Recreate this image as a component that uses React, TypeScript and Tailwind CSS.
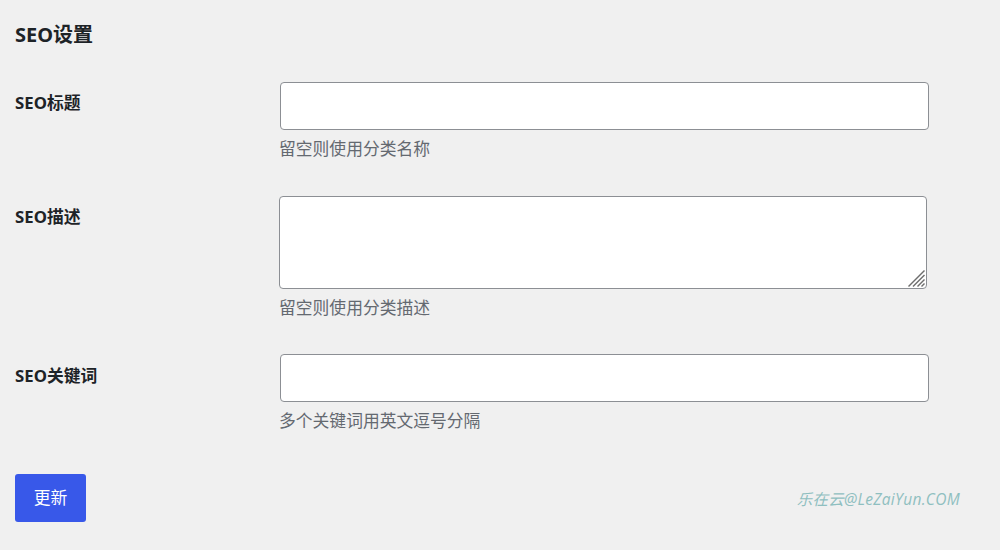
import React from "react";

const font = { fontFamily: '"Segoe UI", "Noto Sans", "Noto Sans CJK SC", sans-serif' };

function Row({ label, desc, children }: { label: string; desc: string; children: React.ReactNode }) {
  return (
    <div className="flex">
      <div className="w-[264px] shrink-0 pt-[9px] text-[16.8px] leading-[24px] font-bold text-[#1d2327]">{label}</div>
      <div className="flex flex-col">
        {children}
        <div className="mt-[7px] text-[16.8px] leading-[24px] text-[#646970]">{desc}</div>
      </div>
    </div>
  );
}

export default function App() {
  return (
    <div className="w-[1000px] h-[550px] bg-[#f0f0f0] px-[15px] pt-[20px]" style={font}>
      <h2 className="text-[20px] leading-[30px] font-bold text-[#1d2327]">SEO设置</h2>
      <div className="mt-[32px] flex flex-col gap-[35px]">
        <Row label="SEO标题" desc="留空则使用分类名称">
          <input className="ml-px w-[649px] h-[48px] bg-white border border-[#8c8f94] rounded-[4px] outline-none px-2" />
        </Row>
        <Row label="SEO描述" desc="留空则使用分类描述">
          <div className="relative w-[648px] h-[93px]">
            <textarea className="block w-full h-full resize-none bg-white border border-[#8c8f94] rounded-[4px] outline-none px-2" />
            <svg className="absolute right-[2px] bottom-[2px]" width="18" height="18" viewBox="0 0 18 18">
              <g stroke="#6e6e6e" strokeWidth="1.4" strokeLinecap="square">
                <line x1="17" y1="2" x2="2" y2="17" />
                <line x1="17" y1="6.5" x2="6.5" y2="17" />
                <line x1="17" y1="11" x2="11" y2="17" />
                <line x1="17" y1="15" x2="15" y2="17" />
              </g>
            </svg>
          </div>
        </Row>
        <Row label="SEO关键词" desc="多个关键词用英文逗号分隔">
          <input className="ml-px w-[649px] h-[48px] bg-white border border-[#8c8f94] rounded-[4px] outline-none px-2 -mt-px" />
        </Row>
      </div>
      <div className="mt-[41px] flex items-center">
        <button className="w-[71px] h-[48px] bg-[#3858e9] text-white text-[16.8px] rounded-[3px]">更新</button>
        <div
          className="ml-auto mr-[25px] mt-[4px] text-[15.5px] italic text-[#8fbfc0] tracking-[0.3px]"
          style={{ fontFamily: '"Open Sans", "Noto Sans CJK SC", sans-serif' }}
        >
          乐在云@LeZaiYun.COM
        </div>
      </div>
    </div>
  );
}
